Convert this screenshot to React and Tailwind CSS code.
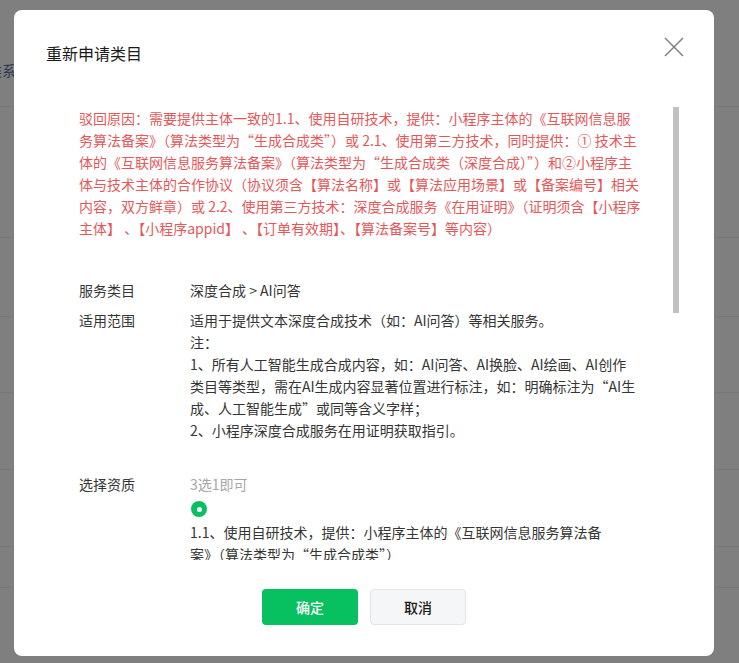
import React from "react"

const reasonLines = [
  "驳回原因：需要提供主体一致的1.1、使用自研技术，提供：小程序主体的《互联网信息服",
  "务算法备案》（算法类型为“生成合成类”）或 2.1、使用第三方技术，同时提供：① 技术主",
  "体的《互联网信息服务算法备案》（算法类型为“生成合成类（深度合成）”）和②小程序主",
  "体与技术主体的合作协议（协议须含【算法名称】或【算法应用场景】或【备案编号】相关",
  "内容，双方鲜章）或 2.2、使用第三方技术：深度合成服务《在用证明》（证明须含【小程序",
  "主体】 、【小程序appid】 、【订单有效期】、【算法备案号】等内容）",
]

const scopeLines = [
  "适用于提供文本深度合成技术（如：AI问答）等相关服务。",
  "注：",
  "1、所有人工智能生成合成内容，如：AI问答、AI换脸、AI绘画、AI创作",
  "类目等类型，需在AI生成内容显著位置进行标注，如：明确标注为“AI生",
  "成、人工智能生成”或同等含义字样；",
  "2、小程序深度合成服务在用证明获取指引。",
]

const options = [
  {
    checked: true,
    lines: ["1.1、使用自研技术，提供：小程序主体的《互联网信息服务算法备", "案》（算法类型为“生成合成类”）"],
  },
  {
    checked: false,
    lines: [
      "2.1、使用第三方技术，同时提供：① 技术主体的《互联网信息服务算",
      "法备案》（算法类型为“生成合成类（深度合成）”）和②小程序主体与",
      "技术主体的合作协议（协议须含【算法名称】或【算法应用场景】或【备",
      "案编号】相关内容，双方鲜章）",
    ],
  },
  {
    checked: false,
    lines: [
      "2.2、使用第三方技术：深度合成服务《在用证明》（证明须含【小程序",
      "主体】、【小程序appid】、【订单有效期】、【算法备案号】等内容）",
    ],
  },
]

const Radio = ({ checked }) =>
  checked ? (
    <div className="w-4 h-4 rounded-full bg-[#07c160] flex items-center justify-center">
      <div className="w-[5px] h-[5px] rounded-full bg-white" />
    </div>
  ) : (
    <div className="w-4 h-4 rounded-full border border-[#c7c7c7] bg-white" />
  )

const App = () => {
  return (
    <div className="relative w-[739px] h-[663px] overflow-hidden bg-[#7f7f7f] font-['Noto_Sans_CJK_SC',sans-serif]">
      {/* dimmed page behind */}
      <div className="flex flex-col">
        <div className="h-[107px] border-b border-[#777777] pt-[59px]">
          <span className="block text-[14px] leading-[22px] text-[#2c3550] -ml-[12px]">类系</span>
        </div>
        <div className="h-[131px] border-b border-[#777777]" />
        <div className="h-[79px] border-b border-[#777777]" />
        <div className="h-[76px] border-b border-[#777777]" />
        <div className="h-[77px] border-b border-[#777777]" />
        <div className="h-[77px] border-b border-[#777777]" />
        <div className="h-[41px] border-b border-[#777777]" />
      </div>

      {/* dialog */}
      <div className="absolute left-[14px] top-[10px] w-[700px] h-[646px] bg-white rounded-[8px] flex flex-col">
        <div className="relative h-[97px] pt-[31px] pl-[32px]">
          <h2 className="text-[16px] leading-[24px] text-[#1a1a1a]">重新申请类目</h2>
          <button className="absolute left-[648px] top-[25px] w-[24px] h-[24px] flex items-center justify-center">
            <svg width="20" height="20" viewBox="0 0 20 20" fill="none" stroke="#808080" strokeWidth="1.5">
              <path d="M1 1 L19 19 M19 1 L1 19" />
            </svg>
          </button>
        </div>

        <div className="relative h-[453px] ml-[65px] mr-[35px] overflow-hidden">
          <div className="pr-[30px] text-[14px] leading-[22px]">
            <div className="text-[#e5585a] whitespace-nowrap">
              {reasonLines.map((l, i) => (
                <div key={i}>{l}</div>
              ))}
            </div>

            <div className="mt-[40px] flex text-[#353535]">
              <div className="w-[111px] shrink-0">服务类目</div>
              <div>深度合成 &gt; AI问答</div>
            </div>

            <div className="mt-[8px] flex text-[#353535]">
              <div className="w-[111px] shrink-0">适用范围</div>
              <div className="whitespace-nowrap">
                {scopeLines.map((l, i) => (
                  <div key={i}>{l}</div>
                ))}
              </div>
            </div>

            <div className="mt-[32px] flex text-[#353535]">
              <div className="w-[111px] shrink-0">选择资质</div>
              <div className="whitespace-nowrap">
                <div className="text-[#a6a6a6]">3选1即可</div>
                {options.map((o, i) => (
                  <div key={i} className="mt-[6px] mb-[14px]">
                    <div className="pl-px">
                      <Radio checked={o.checked} />
                    </div>
                    <div className="mt-[4px]">
                      {o.lines.map((l, j) => (
                        <div key={j}>{l}</div>
                      ))}
                    </div>
                  </div>
                ))}
              </div>
            </div>
          </div>

          {/* scrollbar thumb */}
          <div className="absolute right-0 top-0 w-[6px] h-[206px] bg-[#c1c1c1]" />
        </div>

        <div className="flex-1 flex justify-center gap-[12px] pt-[29px]">
          <button className="w-[96px] h-[36px] rounded-[4px] bg-[#07c160] text-white text-[14px] font-medium">
            确定
          </button>
          <button className="w-[96px] h-[36px] rounded-[4px] bg-[#f5f6f7] border border-[#e3e4e5] text-[#1a1a1a] text-[14px] font-medium">
            取消
          </button>
        </div>
      </div>
    </div>
  )
}

export default App
